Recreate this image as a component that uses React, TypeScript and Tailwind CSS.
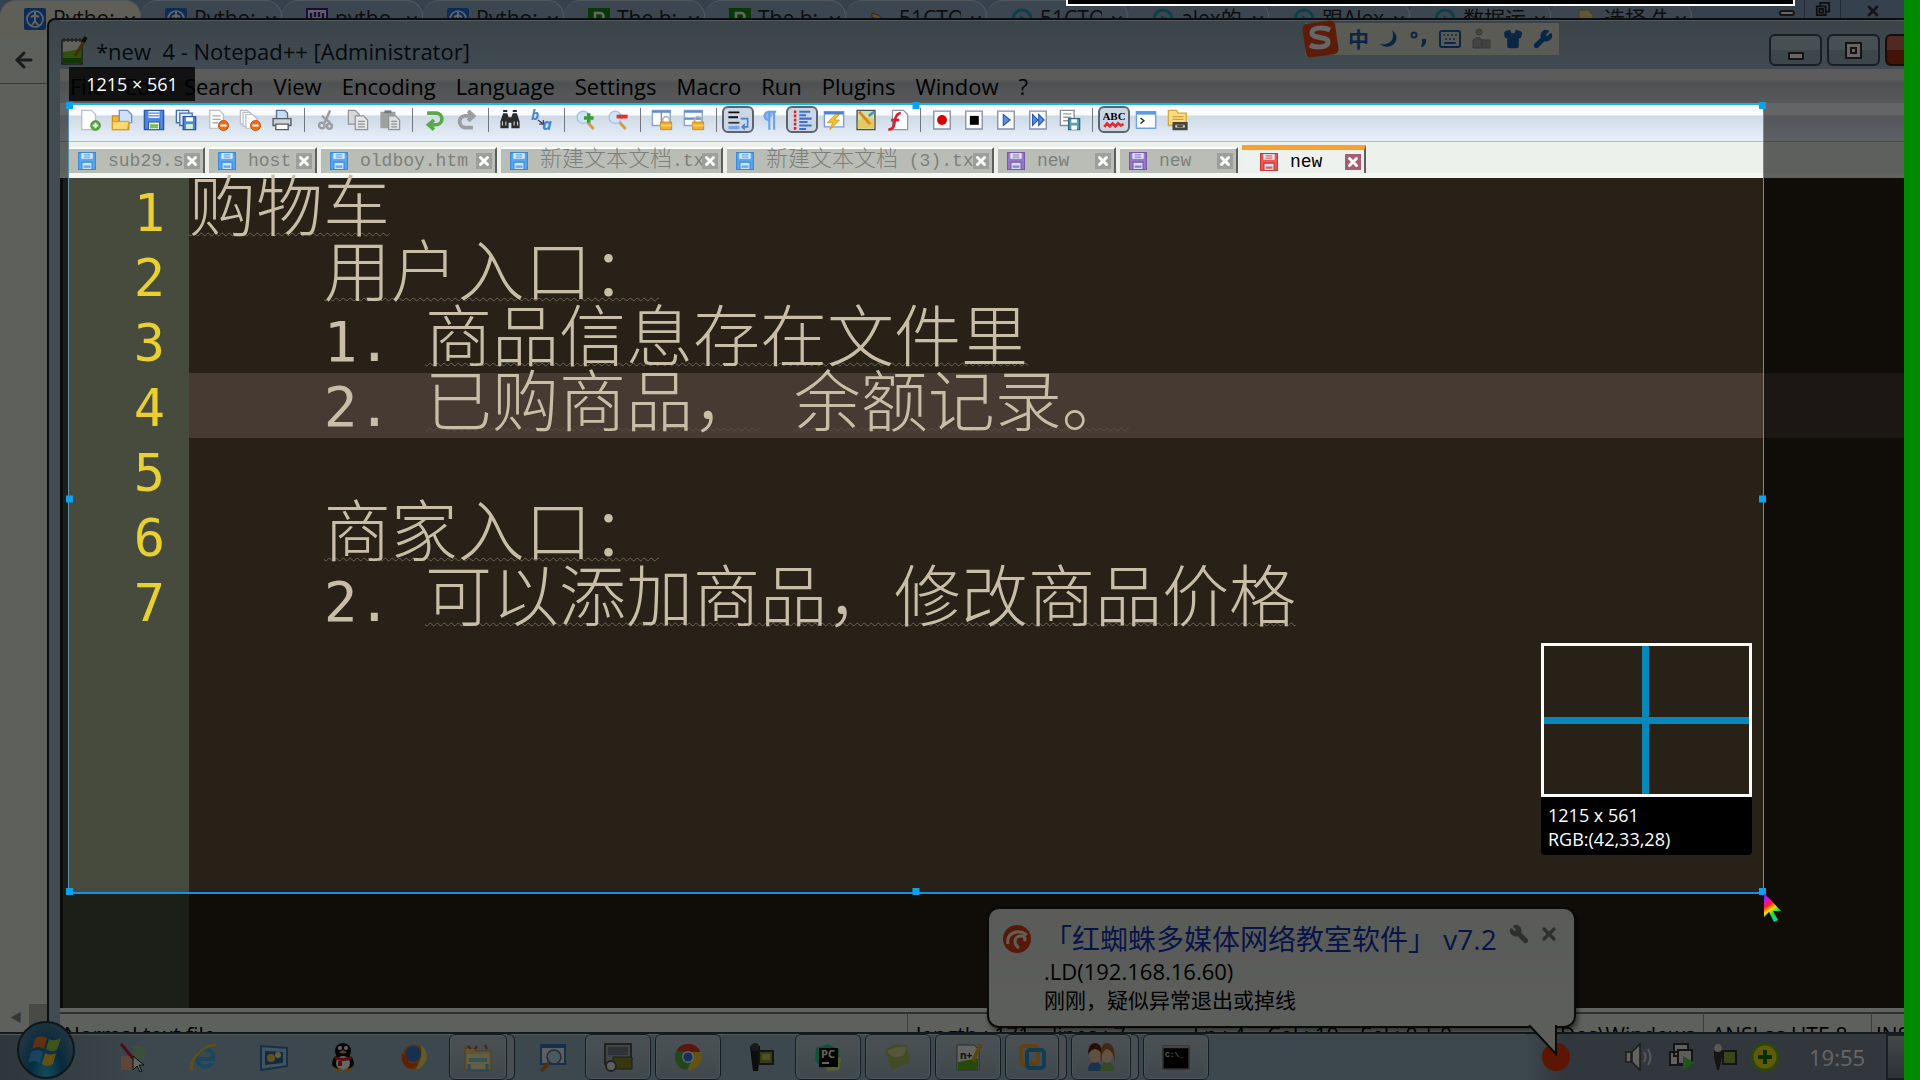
import React from "react";
import { ArrowLeft, Moon, Keyboard, Shirt, Wrench, X } from "lucide-react";

const UI = "font-['Open_Sans','Noto_Sans_CJK_SC',sans-serif]";

/* ---------- browser behind the editor window ---------- */

type BrowserTab = { label: string; kind: "py" | "paw" | "r" | "key" | "play" | "doc" };

const browserTabs: BrowserTab[] = [
  { label: "Pytho:", kind: "py" },
  { label: "Pytho:", kind: "py" },
  { label: "pytho", kind: "paw" },
  { label: "Pytho:", kind: "py" },
  { label: "The b:", kind: "r" },
  { label: "The b:", kind: "r" },
  { label: "51CTO", kind: "key" },
  { label: "51CTO", kind: "play" },
  { label: "alex的", kind: "play" },
  { label: "跟Alex", kind: "play" },
  { label: "数据运", kind: "play" },
  { label: "选择 牛", kind: "doc" },
];

function Favicon({ kind }: { kind: BrowserTab["kind"] }) {
  return (
    <svg viewBox="0 0 22 22" className="size-[22px] shrink-0">
      {kind === "py" && (
        <g>
          <rect width="22" height="22" rx="2" fill="#1f6fd8" />
          <circle cx="11" cy="11" r="8" fill="none" stroke="#fff" strokeWidth="1.6" />
          <path d="M11 4v4M7 9l4-2 4 2M11 8v5l-3 4M11 13l3 4" stroke="#fff" strokeWidth="2" fill="none" />
        </g>
      )}
      {kind === "paw" && (
        <g>
          <rect x="1" y="1" width="20" height="20" fill="#f0f0ff" stroke="#40209a" strokeWidth="2" />
          <path d="M5 5v5M9 4v5M13 4v5M17 5v5" stroke="#40209a" strokeWidth="2.4" />
          <path d="M5 16c0-4 12-4 12 0-2 3-10 3-12 0z" fill="#40209a" />
        </g>
      )}
      {kind === "r" && (
        <g>
          <rect width="22" height="22" fill="#129012" />
          <path d="M7 18V5h5a3.500 3.500 0 0 1 0 7H7M12 12l4 6" stroke="#fff" strokeWidth="2.600" fill="none" />
        </g>
      )}
      {kind === "key" && <path d="M2 5l6 2 10 8-3 4L7 11 2 9z" fill="#e8c870" stroke="#80603a" />}
      {kind === "play" && (
        <g>
          <circle cx="11" cy="11" r="9" fill="none" stroke="#1aa0b4" strokeWidth="3" />
          <path d="M9 7l6 4-6 4z" fill="#1aa0b4" />
        </g>
      )}
      {kind === "doc" && <path d="M4 2h9l5 5v13H4z" fill="#f0d890" stroke="#b09040" />}
    </svg>
  );
}

function Browser() {
  return (
    <section className="absolute inset-0 flex flex-col bg-[#ebf0e6]">
      <div className="flex h-9 shrink-0 bg-[#86a4c0]">
        {browserTabs.map((t, i) => (
          <button
            key={i}
            className={
              "flex h-9 w-[141px] shrink-0 items-center gap-[7px] overflow-hidden rounded-t-2xl border-t border-r border-[#c8dcec] pl-6 text-[21px] whitespace-nowrap text-[#222] " +
              (i === 0 ? "bg-[#eeeedd]" : "bg-[#94b0c8]")
            }
          >
            <Favicon kind={t.kind} />
            <span className="w-[62px] overflow-hidden text-left">{t.label}</span>
            <X className="mt-1 size-4 shrink-0" strokeWidth={3} color="#333" />
          </button>
        ))}
        <div className="ml-auto flex items-start">
          <button aria-label="Minimize browser" className="flex h-[18px] w-9 items-center justify-center border-r border-[#5a7088]">
            <span className="mt-2 h-[6px] w-4 rounded-sm border-2 border-[#333] bg-white" />
          </button>
          <button aria-label="Restore browser" className="flex h-[18px] w-9 items-center justify-center border-r border-[#5a7088]">
            <svg viewBox="0 0 18 18" className="size-4">
              <path d="M6 6V2h10v10h-4M2 6h10v10H2zM5 9h4v4H5z" fill="none" stroke="#222" strokeWidth="2" />
            </svg>
          </button>
          <button aria-label="Close browser" className="flex h-[22px] w-[63px] items-center justify-center">
            <X className="size-4" strokeWidth={4} color="#334" />
          </button>
        </div>
      </div>
      <div className="flex h-12 shrink-0 items-center border-b border-[#8a8a8a] px-3">
        <button aria-label="Back">
          <ArrowLeft className="size-6" strokeWidth={3} color="#444" />
        </button>
      </div>
      <div className="mt-auto mb-[48px] flex h-7 items-center">
        <span className="w-[29px] pl-[10px] text-xs text-[#888]">◀</span>
        <span className="h-7 w-5 bg-[#b4b8b0]" />
      </div>
    </section>
  );
}

/* ---------- toolbar ---------- */

const floppy = (c: string, d: string) => (
  <g>
    <path d="M1 1h14v14H1z" fill={c} stroke={d} />
    <path d="M4 1.500h8v5H4z" fill="#fff" />
    <path d="M4 3h8M4 5h8" stroke={c} strokeWidth=".8" />
    <path d="M4 9.500h8V15H4z" fill="#eef6ee" stroke={d} strokeWidth=".7" />
    <path d="M5 11h6v3H5z" fill="#7fbf4f" />
  </g>
);
const page = (x: number, y: number, w: number, h: number, s = "#9aa0aa", f = "#fff") => (
  <path d={`M${x} ${y}h${w - 3}l3 3v${h - 3}h${-w}z`} fill={f} stroke={s} strokeWidth=".9" />
);
const minusBall = (
  <g>
    <circle cx="12" cy="12" r="3.700" fill="#f06a10" stroke="#c04808" strokeWidth=".6" />
    <path d="M9.800 12h4.400" stroke="#fff" strokeWidth="1.500" />
  </g>
);
const padlock = (
  <g>
    <path d="M8.500 10V8a2.500 2.500 0 0 1 5 0v2" fill="none" stroke="#b8b8a8" strokeWidth="1.300" />
    <path d="M7 9.500h8V15H7z" fill="#f0b030" stroke="#c08010" strokeWidth=".6" />
    <path d="M7 12h8" stroke="#fbe08a" />
  </g>
);
const lens = (sign: React.ReactNode) => (
  <g>
    <path d="M9 9.500l4.500 5" stroke="#d89a50" strokeWidth="2.200" />
    <circle cx="6" cy="6" r="4.500" fill="#cfe4f6" stroke="#a8c4de" />
    {sign}
  </g>
);
const frame = <path d="M2 1.500h12v13H2z" fill="#fdfdfd" stroke="#8890a0" />;

type Tool = { name: string; art: React.ReactNode; on?: boolean };

const toolGroups: Tool[][] = [
  [
    { name: "New", art: <g>{page(2, 1, 10, 14, "#b8bcc4")}<circle cx="12" cy="12" r="3.500" fill="#5aa83a" stroke="#3a8020" strokeWidth=".6" /><path d="M12 10v4M10 12h4" stroke="#fff" strokeWidth="1.300" /></g> },
    { name: "Open", art: <g><path d="M1 5h5l1 1.500h6V15H1z" fill="#f2b632" stroke="#c88a18" strokeWidth=".8" />{page(6, 1, 9, 9, "#6a8cc0", "#cfe0f8")}<path d="M1 9h12l-1 6H1z" fill="#fcd870" stroke="#d09820" strokeWidth=".7" /></g> },
    { name: "Save", art: floppy("#4f86d8", "#2a58a8") },
    { name: "Save All", art: <g><path d="M1 1h9v9H1z" fill="#e8effa" stroke="#4a6ea8" /><path d="M3.500 3h9v9h-9z" fill="#dce8fa" stroke="#4a6ea8" /><path d="M6 5.500h9V15H6z" fill="#4f86d8" stroke="#2a58a8" /><path d="M8 6h5v3H8z" fill="#fff" /><path d="M8 11h5v3.500H8z" fill="#d8f0d0" /></g> },
    { name: "Close", art: <g>{page(2, 1, 10, 13, "#b8bcc4")}<path d="M4 5h6M4 7.500h6M4 10h4" stroke="#aaa" />{minusBall}</g> },
    { name: "Close All", art: <g>{page(1, 1, 8, 10, "#b8bcc4")}{page(3, 2.5, 8, 10, "#b8bcc4")}{page(5, 4, 8, 10, "#b8bcc4")}{minusBall}</g> },
    { name: "Print", art: <g><path d="M4 7V1h6l2 2v4" fill="#c4dcf6" stroke="#5a7090" /><path d="M1.500 7h13v5h-13z" fill="#d0d2d6" stroke="#555c66" /><path d="M3.500 11h9v4h-9z" fill="#fff" stroke="#555c66" /></g> },
  ],
  [
    { name: "Cut", art: <g stroke="#9a9ea2" fill="none" strokeWidth="1.800"><path d="M11 1L7 10M5 5l6 5" /><circle cx="5" cy="12" r="2" /><circle cx="10.500" cy="12.500" r="1.800" /></g> },
    { name: "Copy", art: <g>{page(1, 1, 8, 10, "#8f9498", "#d4d8da")}{page(6, 5, 9, 10, "#8f9498", "#e4e6e8")}<path d="M8 9h5M8 11h5M8 13h5" stroke="#8f9498" /></g> },
    { name: "Paste", art: <g><path d="M1 2h11v12H1z" fill="#9ca09e" /><path d="M4 1h5v2H4z" fill="#777" />{page(7, 5, 8, 10, "#8f9498", "#dcdfe0")}<path d="M9 9h4M9 11h4M9 13h4" stroke="#8f9498" /></g> },
  ],
  [
    { name: "Undo", art: <path d="M3 3h6.500a4.200 4.200 0 0 1 0 8.500H5M8 8l-4 3.500L8 15" fill="none" stroke="#5aa84a" strokeWidth="2.600" /> },
    { name: "Redo", art: <path d="M13 13.500H7a4.300 4.300 0 0 1 0-8.500h5M9.500 1.500L13.500 5l-4 3.500" fill="none" stroke="#9a9ea0" strokeWidth="2.800" /> },
  ],
  [
    { name: "Find", art: <g fill="#2c2c2c"><path d="M3 3h3l1 3h2l1-3h3l2 6v5H9v-4H7v4H1V9z" /><path d="M3 1.500h3M10 1.500h3" stroke="#2c2c2c" strokeWidth="1.500" /><path d="M2.500 9v3M5 9v3M11 9v3M13.500 9v3" stroke="#ccc" strokeWidth=".8" /></g> },
    { name: "Replace", art: <g fontFamily="Open Sans, sans-serif" fontWeight="700" fontStyle="italic"><text x="0" y="8" fontSize="10" fill="#4a84c8">b</text><text x="8" y="15" fontSize="12" fill="#3a8ad8">a</text><path d="M5 8l4 3M9 8v3H6" stroke="#446" fill="none" /></g> },
  ],
  [
    { name: "Zoom In", art: lens(<path d="M10 3v7M6.500 6.500h7" stroke="#3aa030" strokeWidth="2.600" />) },
    { name: "Zoom Out", art: lens(<path d="M7 5.500h8" stroke="#e03030" strokeWidth="2.800" />) },
  ],
  [
    { name: "Sync Vertical", art: <g><path d="M1 1h13v11H1z" fill="#fff" stroke="#8aa4cc" /><path d="M1 2h13" stroke="#5a8ad8" strokeWidth="1.500" /><path d="M7.500 2v10" stroke="#7a8cb0" />{padlock}</g> },
    { name: "Sync Horizontal", art: <g><path d="M1 1h13v11H1z" fill="#fff" stroke="#8aa4cc" /><path d="M1 2h13M1 7h13" stroke="#5a8ad8" strokeWidth="1.500" />{padlock}</g> },
  ],
  [
    { name: "Word Wrap", on: true, art: <g><path d="M1 2.500h8M1 6h7" stroke="#111" strokeWidth="1.300" /><path d="M1 10h8" stroke="#333" strokeWidth="1.300" /><path d="M1 13.500h8" stroke="#7aa4e8" strokeWidth="2.500" /><path d="M10 7h5v6h-4M13 11l-2 2 2 2" fill="none" stroke="#4a80c8" strokeWidth="1.100" /></g> },
    { name: "Show Symbols", art: <path d="M7.500 15V2M11 15V2M12.500 2H7a3 3 0 0 0 0 6" fill="#8ab8f0" stroke="#6aa0e4" strokeWidth="1.500" /> },
    { name: "Indent Guide", on: true, art: <g><path d="M3 1v14" stroke="#e02020" strokeWidth="1.800" strokeDasharray="2 1" /><path d="M6 2h8M6 4.500h5M6 7h9M6 9.500h6M6 12h9M6 14.500h5" stroke="#3a70d0" strokeWidth="1.500" /></g> },
    { name: "User Language", art: <g><path d="M1 2h14v11H1z" fill="#fff" stroke="#7a9cd0" /><path d="M1 3h14" stroke="#4a80d8" strokeWidth="2" /><path d="M9 4L3 10h4l-2 5 7-7H8l4-4z" fill="#f8c030" stroke="#d89010" strokeWidth=".6" /></g> },
    { name: "Document Map", art: <g><path d="M1.500 1h13v14h-13z" fill="#cfe0a0" stroke="#4a5058" /><path d="M2 9l5-4 7 3v6H2z" fill="#e8c860" /><path d="M3 2l8 9" stroke="#d88820" strokeWidth="2" /><path d="M10 5l4-3" stroke="#5090d0" strokeWidth="2" /></g> },
    { name: "Function List", art: <g>{page(4, 1, 11, 14, "#9098a8")}<path d="M1 15c5 0 4-5 5-8s2-4 4-4M3 8h6" fill="none" stroke="#d82030" strokeWidth="2" /></g> },
  ],
  [
    { name: "Record", art: <g>{frame}<circle cx="8" cy="8" r="3.600" fill="#d80000" /></g> },
    { name: "Stop", art: <g>{frame}<path d="M5 5h6.500v6.500H5z" fill="#000" /></g> },
    { name: "Play", art: <g>{frame}<path d="M6 4l5 4-5 4z" fill="#5a8cdc" stroke="#2a58b0" strokeWidth=".8" /></g> },
    { name: "Play Multiple", art: <g>{frame}<path d="M4 4l4 4-4 4zM8.500 4l4 4-4 4z" fill="#5a8cdc" stroke="#2a58b0" strokeWidth=".8" /></g> },
    { name: "Save Macro", art: <g><path d="M1 1h10v11H1z" fill="#fff" stroke="#8a9098" /><path d="M3 3.500h6M3 6h6M3 8.500h4" stroke="#999" /><path d="M7 7h8v8H7z" fill="#5aa0a8" stroke="#2a6a88" /><path d="M9 7.500h4v2.500H9zM9 12h4v3H9z" fill="#fff" /></g> },
  ],
  [
    { name: "Spell Check", on: true, art: <g><text x="8" y="8" textAnchor="middle" fontSize="8" fontWeight="700" fontFamily="Liberation Serif, serif" fill="#000">ABC</text><path d="M1 13l2-2.500 2 2 2-2 2 2 2-2 2 1.500 2-1" fill="none" stroke="#e03030" strokeWidth="2" /></g> },
    { name: "Console", art: <g><path d="M1 2h14v12H1z" fill="#fff" stroke="#6aa4e0" /><path d="M1 3h14" stroke="#5a9ae8" strokeWidth="2.200" /><path d="M4 6.500L6.500 8.500 4 10.500" fill="none" stroke="#222" /></g> },
    { name: "Explorer", art: <g><path d="M1 1h6l1 2h6v9H1z" fill="#f8dc80" stroke="#d8a840" /><path d="M4 5.500h8M4 7.500h8" stroke="#d0a040" /><path d="M5 10.500h9v4H5z" rx="2" fill="none" stroke="#444" strokeWidth="2" /><path d="M7.500 12.500h4" stroke="#444" strokeWidth="1.500" /></g> },
  ],
];

function Toolbar() {
  return (
    <div className="flex h-[39px] shrink-0 items-start border-b border-[#b4bcc0] bg-linear-to-b from-[#fbfcff] from-30% via-[#cfdae6] via-35% to-[#e8f0fa] pt-[3px] pl-[14px]">
      {toolGroups.map((group, g) => (
        <div key={g} className="flex items-center">
          {g > 0 && <span className="mr-[5px] ml-[6px] h-6 w-px bg-[#70767c]" />}
          {group.map((t) => (
            <button
              key={t.name}
              aria-label={t.name}
              className={
                "flex h-[27px] w-8 items-center justify-center rounded-md border-2 " +
                (t.on ? "border-[#5c6470] bg-[#ccd6e4]" : "border-transparent")
              }
            >
              <svg viewBox="0 0 16 16" className="size-[22px] shrink-0">{t.art}</svg>
            </button>
          ))}
        </div>
      ))}
    </div>
  );
}

/* ---------- document tabs ---------- */

type DocTab = { cjk?: string; latin: string; width: string; color: "blue" | "purple" | "red" };

const docTabs: DocTab[] = [
  { latin: "sub29.s", width: "w-[136px]", color: "blue" },
  { latin: "host", width: "w-[108px]", color: "blue" },
  { latin: "oldboy.htm", width: "w-[176px]", color: "blue" },
  { cjk: "新建文本文档", latin: ".tx", width: "w-[222px]", color: "blue" },
  { cjk: "新建文本文档", latin: " (3).tx", width: "w-[267px]", color: "blue" },
  { latin: "new", width: "w-[118px]", color: "purple" },
  { latin: "new", width: "w-[118px]", color: "purple" },
  { latin: "new", width: "w-[124px]", color: "red" },
];

const tabColors = {
  blue: ["#58a8f0", "#3a88d8"],
  purple: ["#9878c8", "#7a58a8"],
  red: ["#f05858", "#c83838"],
};

function DocTabs() {
  return (
    <div className="flex h-9 shrink-0 items-end gap-1 border-b-5 border-[#f4f8f2] bg-[#ecf1ec] pl-[9px] font-['Liberation_Mono','Noto_Sans_CJK_SC',monospace]">
      {docTabs.map((t, i) => {
        const active = t.color === "red";
        const [c, d] = tabColors[t.color];
        return (
          <div
            key={i}
            className={
              "flex items-center border-r-2 border-[#5c605c] pr-[3px] text-lg leading-6 whitespace-pre " +
              t.width +
              (active
                ? " h-[28px] border-t-5 border-t-[#f8a030] bg-[#eef2ee] pl-[18px] text-black"
                : " h-[26px] border-t-2 border-t-white bg-[#babdb6] pl-[9px] text-[#7c807c]")
            }
          >
            <svg viewBox="0 0 16 16" className="size-[18px] shrink-0">
              <path d="M.5.500h15v15H.500z" fill={c} stroke={d} />
              <path d="M3 1h10v5H3z" fill="#e0eefa" />
              <path d="M5 2.500h6M5 4.500h6" stroke={c} />
              <path d="M3.500 9h9v6.500h-9z" fill="#cfe4f4" stroke={d} />
              <path d="M5 13h6" stroke={c} strokeWidth="2" />
            </svg>
            <button className="flex min-w-0 flex-1 items-baseline pl-3 text-left">
              {t.cjk && <span className="text-[22px] font-light">{t.cjk}</span>}
              <span>{t.latin}</span>
            </button>
            <button
              aria-label="Close document"
              className={"flex size-4 shrink-0 items-center justify-center " + (active ? "bg-[#a85c70]" : "bg-[#9ca09a]")}
            >
              <X className="size-[14px]" strokeWidth={5} color="#fff" />
            </button>
          </div>
        );
      })}
    </div>
  );
}

/* ---------- editor ---------- */

type Segment = { t: string; cjk?: boolean };
const lines: Segment[][] = [
  [{ t: "购物车", cjk: true }],
  [{ t: "    " }, { t: "用户入口：", cjk: true }],
  [{ t: "    1. " }, { t: "商品信息存在文件里", cjk: true }],
  [{ t: "    2. " }, { t: "已购商品，", cjk: true }, { t: " " }, { t: "余额记录。", cjk: true }],
  [],
  [{ t: "    " }, { t: "商家入口：", cjk: true }],
  [{ t: "    2. " }, { t: "可以添加商品，修改商品价格", cjk: true }],
];

function Editor() {
  return (
    <div className="flex min-h-0 flex-1 border-l-3 border-[#1c1e18] bg-[#282118] font-['DejaVu_Sans_Mono',monospace]">
      <div className="w-[126px] shrink-0 bg-[#474b3e] pr-[24px] text-right text-[52px] text-[#e8d030]">
        {lines.map((_, i) => (
          <div key={i} className="h-[65px] leading-[71px]">{i + 1}</div>
        ))}
      </div>
      <div className="min-w-0 flex-1">
        {lines.map((line, i) => (
          <div
            key={i}
            className={
              "h-[65px] text-[56px] leading-[68px] whitespace-pre text-[#c8bea8] " +
              (i === 3 ? "bg-[#463a32]" : "")
            }
          >
            {line.map((s, j) =>
              s.cjk ? (
                <span
                  key={j}
                  className={
                    "font-['Noto_Sans_CJK_SC',sans-serif] text-[67px] leading-[1px] font-light underline decoration-wavy decoration-1 underline-offset-1 [text-decoration-skip-ink:none] " +
                    (i === 3 ? "decoration-[#5a4c42]" : "decoration-[#6c6454]")
                  }
                >
                  {s.t}
                </span>
              ) : (
                <span key={j}>{s.t}</span>
              )
            )}
          </div>
        ))}
      </div>
    </div>
  );
}

/* ---------- Notepad++ window ---------- */

const menus = ["File", "Edit", "Search", "View", "Encoding", "Language", "Settings", "Macro", "Run", "Plugins", "Window", "?"];

function NotepadIcon() {
  return (
    <svg viewBox="0 0 28 30" className="h-[30px] w-7">
      <path d="M2 4h20v24H2z" fill="#f4f8e8" stroke="#444" strokeWidth="1.500" />
      <path d="M3 16l18-3v14H3z" fill="#7cc820" />
      <path d="M3 22h18v5H3z" fill="#2e8810" />
      <path d="M4 2v4M8 2v4M12 2v4M16 2v4M20 2v4" stroke="#555" strokeWidth="1.500" />
      <path d="M26 2L15 20" stroke="#b06a20" strokeWidth="3" />
      <path d="M26 1l-3 5" stroke="#222" strokeWidth="3.500" />
    </svg>
  );
}

function ImeBar() {
  return (
    <div className="absolute top-[3px] right-[345px] flex h-8 w-[254px] items-center bg-[#e4e4d8] pr-[6px] text-[#1860b0]">
      <svg viewBox="0 0 38 38" className="-ml-1 size-[38px] shrink-0">
        <rect x="3" y="2" width="33" height="34" rx="5" fill="#e84818" transform="rotate(-8 19 19)" />
        <path d="M29 10c-6-3-18-3-18 3s16 3 16 9-13 6-18 3" fill="none" stroke="#fff" strokeWidth="5" />
      </svg>
      <div className="flex flex-1 items-center justify-between pl-[9px]">
        <span className="text-[21px] leading-8 font-bold">中</span>
        <svg viewBox="0 0 20 20" className="size-5">
          <path d="M13 1q8 7 2 14-7 6-14 0 9 1 12-4 2-5 0-10z" fill="#1860b0" />
        </svg>
        <svg viewBox="0 0 18 20" className="h-5 w-[18px]">
          <circle cx="4" cy="6" r="2.500" fill="none" stroke="#1860b0" strokeWidth="2" />
          <path d="M12 10h4v4l-3 4h-2l1-4z" fill="#1860b0" />
        </svg>
        <Keyboard className="size-6" strokeWidth={2} />
        <svg viewBox="0 0 20 22" className="h-[22px] w-5" fill="#aaa" stroke="#888">
          <circle cx="7" cy="4" r="3" />
          <path d="M1 20v-8q5-5 9 0v8zM10 12h8v8h-8zM14 12v8" />
        </svg>
        <Shirt className="size-5" fill="#1860b0" />
        <Wrench className="size-5" fill="#1860b0" />
      </div>
    </div>
  );
}

function NotepadWindow() {
  return (
    <section className="absolute top-[18px] right-0 bottom-[36px] left-[47px] flex flex-col rounded-tl-lg border-t-2 border-l-2 border-[#1c2428] bg-linear-to-b from-[#92aab4] to-[#a2bccc] to-5% pl-[11px]">
      <header className="flex h-[49px] shrink-0 items-center border-t border-[#d0e0e8] pt-3">
        <NotepadIcon />
        <h1 className="pl-[8px] text-[22px] leading-8 whitespace-pre text-[#0c1a28]">*new  4 - Notepad++ [Administrator]</h1>
        <div className="ml-auto flex items-center gap-[5px] pb-[2px]">
          <button aria-label="Minimize" className="flex h-8 w-[53px] items-center justify-center rounded-md border-2 border-[#3c4c58] bg-linear-to-b from-[#b4c6d0] from-50% to-[#98aebc] to-50%">
            <span className="mt-3 h-2 w-4 border-2 border-[#333] bg-white" />
          </button>
          <button aria-label="Restore" className="flex h-8 w-[53px] items-center justify-center rounded-md border-2 border-[#3c4c58] bg-linear-to-b from-[#b4c6d0] from-50% to-[#98aebc] to-50%">
            <span className="flex size-[17px] items-center justify-center border-2 border-[#333] bg-white">
              <span className="size-[7px] border-2 border-[#333]" />
            </span>
          </button>
          <button aria-label="Close" className="h-8 w-[19px] rounded-l-md border-2 border-r-0 border-[#3c2020] bg-linear-to-b from-[#c86858] from-50% to-[#a83018] to-50%" />
        </div>
      </header>
      <ImeBar />
      <nav className="flex h-[34px] shrink-0 items-center bg-linear-to-b from-[#e6e8e2] from-30% via-[#c4ccd0] via-40% to-[#dcdfe0] text-[22px] text-black">
        {menus.map((m) => (
          <button key={m} className="px-[10px] leading-8">{m}</button>
        ))}
      </nav>
      <Toolbar />
      <DocTabs />
      <Editor />
      <footer className="flex h-9 shrink-0 border-t-4 border-[#f0f4ec] bg-[#ebf0e6] text-[21px] leading-[42px] whitespace-pre text-black">
        <span className="h-9 flex-1 overflow-hidden border-t-2 border-[#777] pl-1">Normal text file</span>
        <span className="h-9 w-[278px] overflow-hidden border-t-2 border-l border-t-[#777] border-l-[#999] pl-2">length : 171    lines : 7</span>
        <span className="h-9 w-[367px] overflow-hidden border-t-2 border-t-[#777] pl-2">Ln : 4    Col : 19    Sel : 0 | 0</span>
        <span className="h-9 w-[151px] overflow-hidden border-t-2 border-t-[#777] pl-2">Dos\Windows</span>
        <span className="h-9 w-[168px] overflow-hidden border-t-2 border-l border-t-[#777] border-l-[#999] pl-2">ANSI as UTF-8</span>
        <span className="h-9 w-[33px] overflow-hidden border-t-2 border-l border-t-[#777] border-l-[#999] pl-1">INS</span>
      </footer>
    </section>
  );
}

/* ---------- taskbar ---------- */

const apps: { name: string; width: string; open?: boolean; stack?: boolean; art: React.ReactNode }[] = [
  { name: "Screen tool", width: "w-[70px]", art: <g><path d="M2 14h12v14H2z" fill="#f0b090" /><path d="M14 4q12-2 14 8l-6 8-8-4z" fill="#90c890" /><path d="M2 2l10 12 4 4" stroke="#c02040" strokeWidth="3" /><path d="M14 14v14l4-4 3 6 2-1-3-6h5z" fill="#fff" stroke="#222" /></g> },
  { name: "Internet Explorer", width: "w-[70px]", art: <g fill="none"><path d="M24 17H8c0-12 15-12 16-3zM8 17c1 9 12 9 15 4" stroke="#48b0f0" strokeWidth="4" /><path d="M3 28C-1 20 14 2 27 3" stroke="#f0c830" strokeWidth="2.500" /></g> },
  { name: "Pictures", width: "w-[69px]", art: <g><path d="M2 4l26 2v18L2 28z" fill="#a0d0f0" stroke="#3878b8" strokeWidth="2" /><path d="M6 9l18 1v11L6 23z" fill="#3868a0" /><circle cx="12" cy="16" r="4" fill="#f0d040" /><circle cx="19" cy="13" r="3" fill="#f8f0a0" /></g> },
  { name: "QQ", width: "w-[70px]", art: <g><ellipse cx="15" cy="9" rx="8" ry="8" fill="#111" /><path d="M4 23q0-11 11-11t11 11q-4 5-11 5T4 23z" fill="#111" /><ellipse cx="15" cy="21" rx="7" ry="7" fill="#fff" /><path d="M7 14q8 4 16 0l1 3q-9 4-17 0z" fill="#e02020" /><path d="M10 19h4v5h-4z" fill="#e02020" /><path d="M11 10q4 3 8 0l-4-2z" fill="#f0a020" /><circle cx="12" cy="6" r="2" fill="#fff" /><circle cx="18" cy="6" r="2" fill="#fff" /><path d="M7 28h6M17 28h6" stroke="#f0a020" strokeWidth="3" /></g> },
  { name: "Firefox", width: "w-[71px]", art: <g><circle cx="15" cy="15" r="12.500" fill="#f08020" /><circle cx="14" cy="12" r="8" fill="#3878c8" /><path d="M3 12q6 0 6 6t10 2q-3 8-10 6-7-4-6-14z" fill="#e85010" /><path d="M22 3q9 8 4 18-4 6-10 7 8-10 6-25z" fill="#f8e060" /></g> },
  { name: "Explorer", width: "w-[58px]", open: true, stack: true, art: <g><path d="M2 6h8l3 3h15v19H2z" fill="#f0d880" stroke="#c8a040" /><path d="M4 12h22v15H4z" fill="#f8ecb0" /><path d="M6 16h18v4H6z" fill="#80d0d8" /><path d="M6 22v7h18v-7" fill="none" stroke="#68b8e0" strokeWidth="3" /><path d="M5 4l3 3M14 4l-2 3M22 3l2 4" stroke="#c05030" strokeWidth="2" /></g> },
  { name: "Search", width: "w-[66px]", art: <g><path d="M4 3h24v19H4z" fill="#e8f0f8" stroke="#3878b8" strokeWidth="2" /><path d="M4 4h24" stroke="#3878b8" strokeWidth="4" /><path d="M12 21l-8 8" stroke="#c07838" strokeWidth="4" /><circle cx="17" cy="15" r="7" fill="#b8dcf0" stroke="#668" strokeWidth="1.500" /></g> },
  { name: "Drive", width: "w-[66px]", open: true, art: <g><path d="M2 2h26v20H2z" fill="#a8b0a8" stroke="#555" strokeWidth="2" /><path d="M5 5h20v8H5z" fill="#708088" /><path d="M10 15h19v12H10z" fill="#889028" stroke="#444" /><circle cx="8" cy="24" r="5" fill="#eee" stroke="#555" strokeWidth="2" /></g> },
  { name: "Chrome", width: "w-[66px]", open: true, art: <g><circle cx="15" cy="15" r="13" fill="#58b048" /><path d="M3.700 8.500A13 13 0 0 1 27.300 10H15z" fill="#e03828" /><path d="M27.500 10A13 13 0 0 1 14 28l6-11-2-7z" fill="#f8d030" /><circle cx="15" cy="15" r="6" fill="#fff" /><circle cx="15" cy="15" r="4.600" fill="#3878e0" /></g> },
  { name: "Network", width: "w-[70px]", art: <g><path d="M5 4h10v10l-2 15H8L6 14z" fill="#222" /><circle cx="10" cy="5" r="4" fill="#444" /><path d="M14 9h14v13H14z" fill="#889838" stroke="#333" strokeWidth="2" /><path d="M17 12h8v6h-8z" fill="#c0d060" /></g> },
  { name: "PyCharm", width: "w-[66px]", open: true, art: <g><path d="M3 6l12-4 12 6-3 12L8 27 2 18z" fill="#20d090" /><path d="M14 18l14-2-2 12-12 1z" fill="#e8f060" /><path d="M6 6h19v19H6z" fill="#000" /><text x="8" y="16" fontSize="11" fontWeight="700" fontFamily="Open Sans, sans-serif" fill="#fff">PC</text><path d="M9 21h7" stroke="#fff" strokeWidth="2" /></g> },
  { name: "Notes", width: "w-[66px]", open: true, art: <g><path d="M2 8q10-8 22-4l3 17q-10 2-18 8z" fill="#a8bc60" /><path d="M4 9q10-6 19-4 0 10-8 10T4 9z" fill="#d0dc98" /></g> },
  { name: "Notepad++", width: "w-[66px]", open: true, art: <g><path d="M4 3h17l5 5v20H4z" fill="#f8fff0" stroke="#667" /><path d="M5 20l20-4v12H5z" fill="#60b818" /><text x="7" y="17" fontSize="10" fontWeight="700" fontFamily="Open Sans, sans-serif" fill="#222">n+</text><path d="M28 2l-8 17" stroke="#e8a828" strokeWidth="4" /></g> },
  { name: "VMware", width: "w-[54px]", open: true, stack: true, art: <g fill="none" strokeWidth="4"><rect x="4" y="4" width="17" height="18" rx="3" stroke="#f0a828" /><rect x="10" y="8" width="17" height="18" rx="3" stroke="#2898d8" /></g> },
  { name: "Contacts", width: "w-[60px]", open: true, stack: true, art: <g><path d="M2 29q0-9 7-9t7 9z" fill="#4080c0" /><path d="M14 29q0-9 7-9t7 9z" fill="#80b860" /><ellipse cx="9" cy="12" rx="6" ry="9" fill="#f0c8a0" /><ellipse cx="21" cy="12" rx="6" ry="9" fill="#f0d0a8" /><path d="M2 13q0-12 7-12t7 12q-3-6-7-6t-7 6z" fill="#602810" /><path d="M15 20q-2-19 6-19t8 19q-2-12-8-13-5 1-6 13z" fill="#a06828" /></g> },
  { name: "Console", width: "w-[66px]", open: true, art: <g><path d="M2 4h26v23H2z" fill="#000" stroke="#777" strokeWidth="1.500" /><path d="M2 5h26" stroke="#aaa" strokeWidth="2.500" /><text x="4" y="15" fontSize="8" fontWeight="700" fontFamily="Liberation Mono, monospace" fill="#ddd">C:\_</text></g> },
];

function Taskbar() {
  return (
    <footer className="absolute right-0 bottom-0 left-0 flex h-12 items-stretch border-t-2 border-[#30444c] bg-linear-to-r from-[#788894] via-[#98b4c4] via-8% to-[#98b4c4] to-60% shadow-[inset_0_1px_0_#c8dce8]">
      <button aria-label="Start" className="-mt-[13px] ml-[17px] size-[58px] shrink-0 rounded-full border-2 border-[#203848] bg-radial-[at_50%_100%] from-[#30c0e8] via-[#186898] via-45% to-[#7898a8]">
        <svg viewBox="0 0 54 54" className="size-[54px]">
          <path d="M16 16q5-5 12-1l-3 11q-5-4-12 0z" fill="#f07828" />
          <path d="M30 16q5 3 12-1l-4 12q-5 3-11-1z" fill="#98d040" />
          <path d="M12 29q6-4 12 0l-3 11q-5-4-12 0z" fill="#40a8f0" />
          <path d="M26 30q5 3 11 0l-3 11q-6 4-11 0z" fill="#f8c830" />
        </svg>
      </button>
      <nav className="ml-6 flex items-stretch gap-1">
        {apps.map((a) => (
          <div key={a.name} className="flex items-stretch">
            <button
              aria-label={a.name}
              className={
                "flex items-center justify-center rounded-md border " +
                a.width +
                (a.open
                  ? " border-[#384c58] bg-linear-to-b from-[#bccacf] to-[#a0b6c2] shadow-[inset_0_0_0_1px_#c4d4da]"
                  : " -mr-1 border-transparent")
              }
            >
              <svg viewBox="0 0 30 30" className="size-[30px]">{a.art}</svg>
            </button>
            {a.stack && <span className="w-2 rounded-r-md border border-l-0 border-[#384c58] bg-[#b4c4cc]" />}
          </div>
        ))}
      </nav>
      <div className="ml-auto flex w-[378px] shrink-0 items-center bg-linear-to-r from-[#98b4c4] to-[#7c8a96] to-10%">
        <span className="ml-4 size-7 rounded-full bg-[#e83808]" />
        <svg viewBox="0 0 32 30" className="ml-[54px] h-[30px] w-8">
          <path d="M2 10h5v10H2zM8 10l8-8v26l-8-8z" fill="#f4f4f4" stroke="#444" strokeWidth="1.500" />
          <path d="M20 10q3 5 0 10M24 7q5 8 0 16" fill="none" stroke="#ddd" strokeWidth="2" />
        </svg>
        <svg viewBox="0 0 28 30" className="ml-3 h-[30px] w-7">
          <path d="M6 2h14v12H6zM2 10h14v13H2z" fill="#f0f0f0" stroke="#333" strokeWidth="2" />
          <path d="M10 8h14v14H10z" fill="#e8e8e8" stroke="#333" strokeWidth="2" />
          <path d="M15 14l12 7-12 7z" fill="#58d048" />
        </svg>
        <svg viewBox="0 0 28 30" className="ml-[14px] h-[30px] w-7">
          <path d="M4 3h8v12l-3 13H7L4 15z" fill="#333" />
          <circle cx="8" cy="6" r="4" fill="#ddd" />
          <path d="M13 9h13v13H13z" fill="#90b040" stroke="#333" strokeWidth="2" />
        </svg>
        <svg viewBox="0 0 30 30" className="ml-3 size-[30px]">
          <circle cx="15" cy="15" r="13" fill="#f0e020" stroke="#70b020" strokeWidth="3" />
          <path d="M15 8v14M8 15h14" stroke="#107010" strokeWidth="4" />
        </svg>
        <time className="ml-[29px] text-[22px] text-white">19:55</time>
        <button aria-label="Show desktop" className="ml-auto h-full w-[18px] border-2 border-r-0 border-[#404c58] bg-linear-to-b from-[#a8b4b8] to-[#707c88]" />
      </div>
    </footer>
  );
}

function Balloon() {
  return (
    <aside className="absolute right-[328px] bottom-[52px] flex h-[121px] w-[589px] rounded-xl border-2 border-[#181c18] bg-linear-to-b from-[#e0e4dc] to-[#e8ece6] pr-[15px] pl-[13px] shadow-[2px_3px_5px_rgba(0,0,0,0.5)]">
      <svg viewBox="0 0 30 30" className="mt-[15px] size-[30px] shrink-0">
        <circle cx="15" cy="15" r="14" fill="#d84018" />
        <path d="M6 20C4 8 17 5 25 11M17 24c-6-4-5-12 2-12 4 0 5 3 3 5" fill="none" stroke="#f8e8d8" strokeWidth="3" />
      </svg>
      <div className="ml-3 pt-3 text-[21px] leading-[29px] whitespace-nowrap text-black">
        <h2 className="text-[28px] leading-9 text-[#1434b4]">「红蜘蛛多媒体网络教室软件」 v7.2</h2>
        <p className="text-[22px]">.LD(192.168.16.60)</p>
        <p>刚刚，疑似异常退出或掉线</p>
      </div>
      <div className="ml-auto flex gap-[10px] pt-[15px]">
        <button aria-label="Options" className="size-5"><Wrench className="size-5 -scale-x-100" fill="#777" color="#777" /></button>
        <button aria-label="Dismiss" className="size-5"><X className="size-5" strokeWidth={4} color="#777" /></button>
      </div>
      <svg viewBox="0 0 32 32" className="absolute -bottom-[31px] left-[538px] size-8">
        <path d="M2 0L29 29V0" fill="#e8ece6" stroke="#181c18" strokeWidth="2" />
      </svg>
    </aside>
  );
}

/* ---------- capture overlay ---------- */

const handles = [
  "-top-[3px] -left-[3px]",
  "-top-[3px] left-1/2 -translate-x-1/2",
  "-top-[3px] -right-[3px]",
  "top-1/2 -left-[3px] -translate-y-1/2",
  "top-1/2 -right-[3px] -translate-y-1/2",
  "-bottom-[3px] -left-[3px]",
  "-bottom-[3px] left-1/2 -translate-x-1/2",
  "-bottom-[3px] -right-[3px]",
];

function Capture() {
  return (
    <div className="absolute top-[103px] right-[140px] left-[68px] h-[791px] border-x border-y-2 border-x-[#8a8274] border-t-[#18b8e0] border-b-[#1890e0] border-l-[#5a90b0] shadow-[0_0_0_2000px_rgba(0,0,0,0.6)]">
      {handles.map((h) => (
        <span key={h} className={"absolute size-[7px] bg-[#10a0f0] " + h} />
      ))}
      <div className="absolute -top-[38px] left-0 flex h-[34px] w-[126px] items-center justify-center bg-black/80 text-[18px] text-white">
        1215 × 561
      </div>
      <div className="absolute right-[11px] bottom-[37px] w-[211px] rounded-sm bg-black pb-1">
        <div className="relative h-[154px] border-3 border-white bg-[#282118]">
          <span className="absolute inset-y-0 left-[98px] w-[7px] bg-[#0888b8]" />
          <span className="absolute inset-x-0 top-[71px] h-[7px] bg-[#0888b8]" />
        </div>
        <p className="px-[7px] pt-[6px] text-[18px] leading-6 text-white">1215 x 561</p>
        <p className="px-[7px] text-[18px] leading-6 text-white">RGB:(42,33,28)</p>
      </div>
      <svg viewBox="0 0 18 30" className="absolute -right-[18px] -bottom-[31px] h-[30px] w-[18px]">
        <defs>
          <linearGradient id="rainbow" x1="0" y1="0" x2="0.4" y2="1">
            <stop offset="0" stopColor="#3030ff" />
            <stop offset="0.25" stopColor="#d010e0" />
            <stop offset="0.450" stopColor="#ff2020" />
            <stop offset="0.620" stopColor="#ffe000" />
            <stop offset="0.800" stopColor="#10e040" />
            <stop offset="1" stopColor="#10d0a0" />
          </linearGradient>
        </defs>
        <path d="M1 0v24l5-5 5 10 4-2-5-9h8z" fill="url(#rainbow)" />
      </svg>
    </div>
  );
}

export default function App() {
  return (
    <main className={"flex h-screen min-h-[1080px] overflow-hidden bg-[#008a00] " + UI}>
      <div className="relative min-w-0 flex-1 overflow-hidden bg-black">
        <Browser />
        <NotepadWindow />
        <Taskbar />
        <Balloon />
        <Capture />
        <div className="absolute top-0 right-[109px] h-[6px] w-[729px] border-2 border-t-0 border-white bg-black" />
      </div>
      <div className="w-4 shrink-0" />
    </main>
  );
}
